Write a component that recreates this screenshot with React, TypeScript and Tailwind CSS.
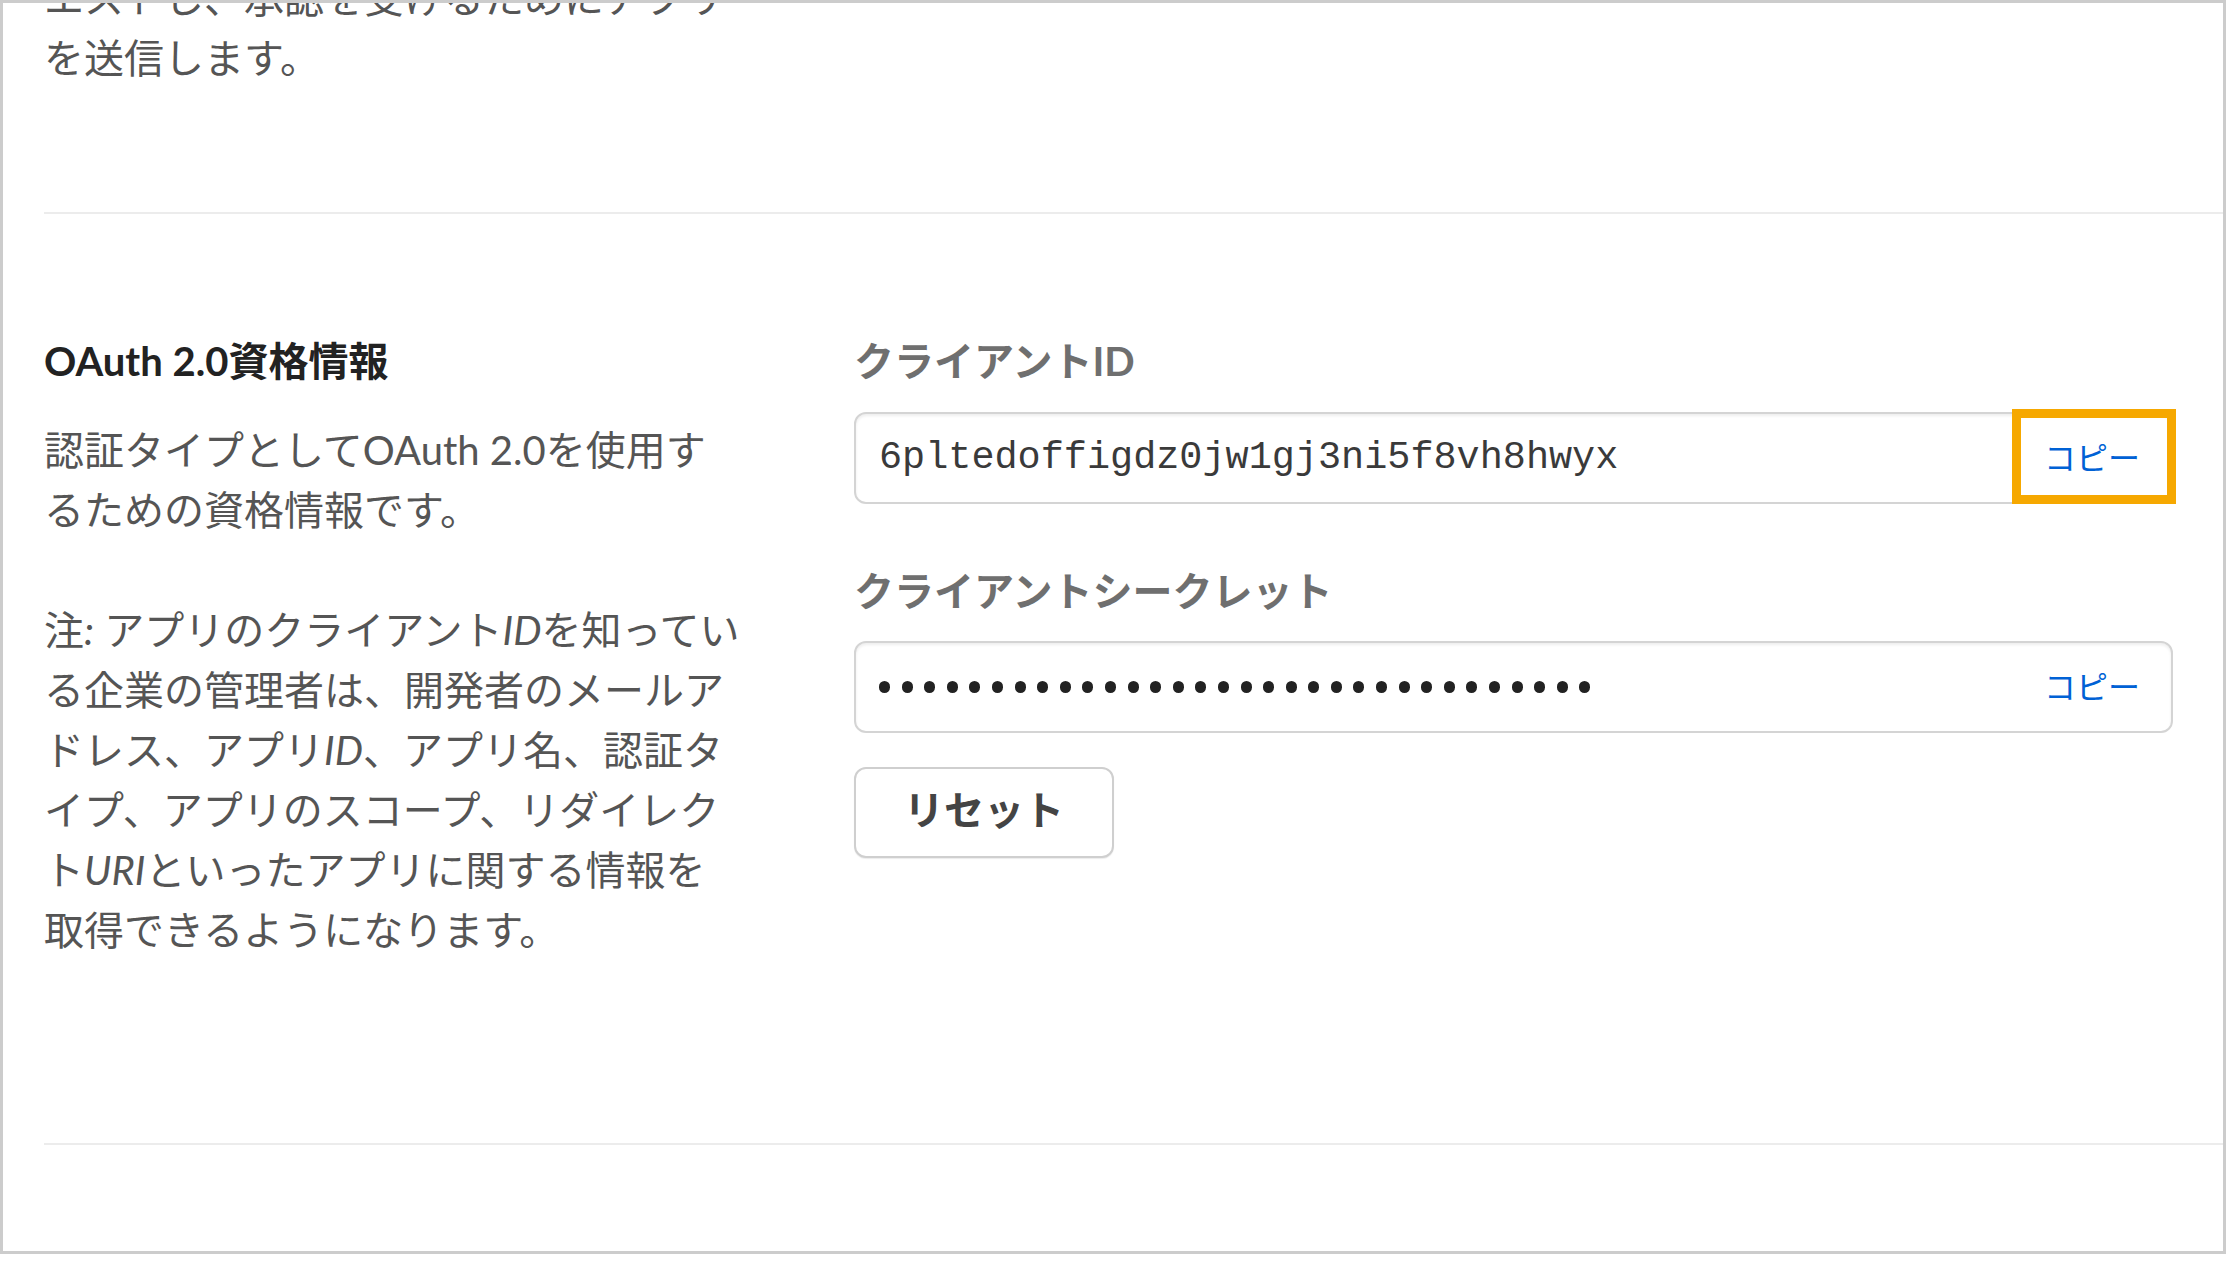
import React from "react";

const CLIENT_ID = "6pltedoffigdz0jw1gj3ni5f8vh8hwyx";

function CopyField({ value, masked = false, highlight = false }: { value: string; masked?: boolean; highlight?: boolean }) {
  return (
    <div className="relative flex h-[92px] items-center justify-between rounded-[12px] border-2 border-[#d4d4d4] bg-white pl-[23px] pr-[31px] shadow-[inset_0_2px_3px_rgba(0,0,0,0.07)]">
      {masked ? (
        // password mask, one disc per character
        <span className="flex gap-[11.6px]" aria-label="secret">
          {value.split("").map((_, i) => (
            <span key={i} className="h-[12px] w-[11px] rounded-full bg-[#222]" />
          ))}
        </span>
      ) : (
        <span className="font-['Liberation_Mono',monospace] text-[38.5px] leading-none text-[#3a3a3a]">{value}</span>
      )}
      <button className="text-[32px] leading-none text-[#0061d5]">コピー</button>
      {/* annotation frame around the copy button */}
      {highlight && (
        <div className="pointer-events-none absolute right-[-5px] top-[-5px] h-[95px] w-[164px] border-[9px] border-[#f6a800]" />
      )}
    </div>
  );
}

export default function App() {
  return (
    <div className="h-[1268px] w-[2227px] bg-white font-['Lato','Noto_Sans_CJK_JP',sans-serif]">
      <div className="h-[1254px] w-[2226px] overflow-hidden border-[3px] border-[#cccccc]">
        <div className="pl-[41px]">
          <section className="border-b-2 border-[#ececec] pb-[124px]">
            <p className="-mt-[35px] text-[40px] leading-[60px] text-[#555]">
              エストし、承認を受けるためにアプリ
              <br />
              を送信します。
            </p>
          </section>

          <section className="flex border-b-2 border-[#ececec] pb-[183px] pt-[117px]">
            <div className="w-[810px] shrink-0 pr-[50px]">
              <h2 className="text-[40px] font-bold leading-[60px] text-[#222]">OAuth 2.0資格情報</h2>
              <p className="mt-[29px] text-[40px] leading-[60px] text-[#555]">
                認証タイプとしてOAuth 2.0を使用す
                <br />
                るための資格情報です。
              </p>
              <p className="mt-[60px] text-[40px] leading-[60px] text-[#555]">
                注<i>:</i> アプリのクライアント<i>ID</i>を知ってい
                <br />
                る企業の管理者は、開発者のメールア
                <br />
                ドレス、アプリ<i>ID</i>、アプリ名、認証タ
                <br />
                イプ、アプリのスコープ、リダイレク
                <br />
                ト<i>URI</i>といったアプリに関する情報を
                <br />
                取得できるようになります。
              </p>
            </div>

            <div className="flex-1 pr-[50px]">
              <div className="text-[40px] font-bold leading-[60px] text-[#6f6f6f]">クライアントID</div>
              <div className="mt-[21px]">
                <CopyField value={CLIENT_ID} highlight />
              </div>

              <div className="mt-[57px] text-[40px] font-bold leading-[60px] text-[#6f6f6f]">クライアントシークレット</div>
              <div className="mt-[20px]">
                <CopyField value={CLIENT_ID} masked />
              </div>

              <button className="mt-[34px] h-[91px] w-[260px] rounded-[12px] border-2 border-[#cfcfcf] bg-white pb-[6px] text-[40px] font-bold leading-none text-[#444] shadow-[0_1px_1px_rgba(0,0,0,0.08)]">
                リセット
              </button>
            </div>
          </section>
        </div>
      </div>
    </div>
  );
}
